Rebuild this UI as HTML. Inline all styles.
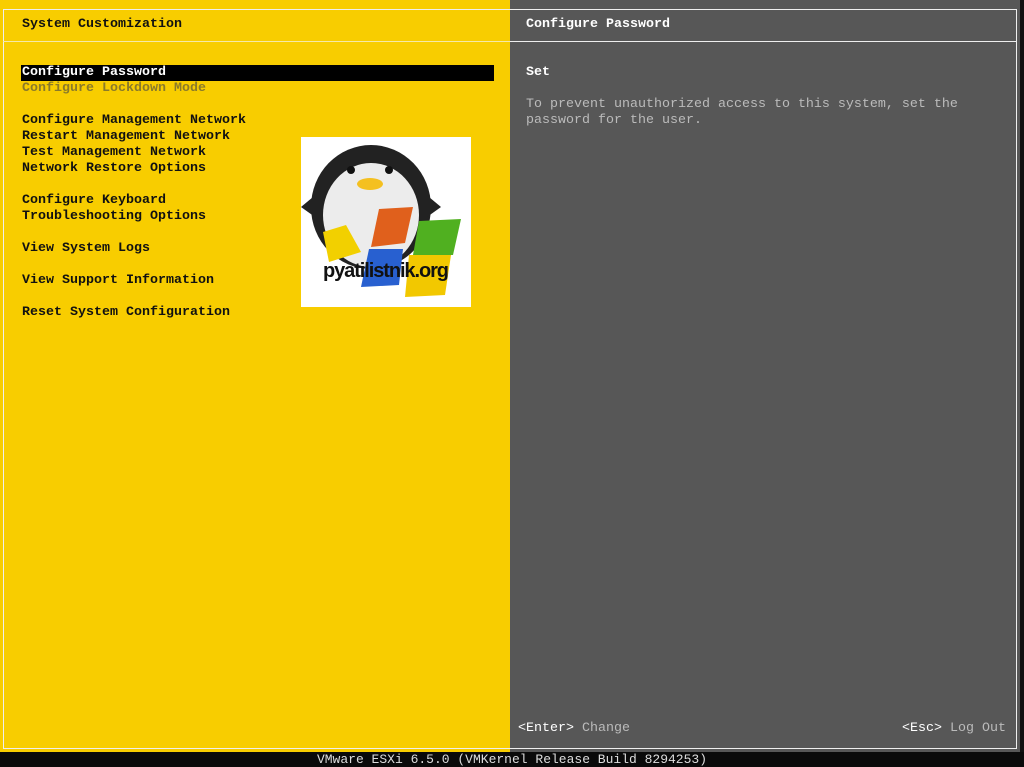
<!DOCTYPE html>
<html><head><style>
body{margin:0;width:1024px;height:767px;background:#111;position:relative;overflow:hidden;font-family:"Liberation Mono",monospace;font-size:13.33px;font-weight:bold}
.l{position:absolute;left:0;top:0;width:510px;height:752px;background:#f8cd00}
.r{position:absolute;left:510px;top:0;width:510px;height:752px;background:#575757}
.b{position:absolute;left:0;top:752px;width:1024px;height:15px;background:#0a0a0a;color:#ddd;text-align:center;font-size:13px;line-height:15px;font-weight:normal}
.t{position:absolute;white-space:pre;line-height:16px}
.ln{position:absolute;background:#eee}
</style></head><body>
<div class="l"></div><div class="r"></div>
<div class="ln" style="left:3px;top:9px;width:1014px;height:1px"></div>
<div class="ln" style="left:3px;top:9px;width:1px;height:740px"></div>
<div class="ln" style="left:3px;top:748px;width:1014px;height:1px"></div>
<div class="ln" style="left:1016px;top:9px;width:1px;height:740px"></div>
<div class="ln" style="left:3px;top:41px;width:1014px;height:1px;background:#f5e9a8"></div>
<div class="ln" style="left:510px;top:41px;width:507px;height:1px"></div>
<div class="t" style="left:22px;top:17px;color:#111">System Customization</div>
<div class="t" style="left:526px;top:17px;color:#fff">Configure Password</div>
<div style="position:absolute;left:21px;top:65px;width:473px;height:16px;background:#000"></div>
<div class="t" style="left:22px;top:65px;color:#fff">Configure Password</div>
<div class="t" style="left:22px;top:81px;color:#8a7a2a">Configure Lockdown Mode</div>
<div class="t" style="left:22px;top:113px;color:#111">Configure Management Network
Restart Management Network
Test Management Network
Network Restore Options

Configure Keyboard
Troubleshooting Options

View System Logs

View Support Information

Reset System Configuration</div>
<div class="t" style="left:526px;top:65px;color:#fff">Set</div>
<div class="t" style="left:526px;top:97px;color:#bbb;font-weight:normal">To prevent unauthorized access to this system, set the
password for the user.</div>
<div class="t" style="left:518px;top:721px;color:#fff;font-weight:normal">&lt;Enter&gt; <span style="color:#bbb">Change</span></div>
<div class="t" style="left:902px;top:721px;color:#fff;font-weight:normal">&lt;Esc&gt; <span style="color:#bbb">Log Out</span></div>
<div style="position:absolute;left:301px;top:137px;width:170px;height:170px;background:#fff;overflow:hidden">
<svg width="170" height="170">
<ellipse cx="70" cy="70" rx="60" ry="62" fill="#222"/>
<ellipse cx="70" cy="78" rx="48" ry="52" fill="#ececec"/>
<path d="M12 60 L0 70 L14 80Z M128 60 L140 70 L126 80Z" fill="#222"/>
<circle cx="50" cy="33" r="4" fill="#111"/><circle cx="88" cy="33" r="4" fill="#111"/>
<ellipse cx="69" cy="47" rx="13" ry="6" fill="#f4c020"/>
<path d="M22 95 L45 88 L60 115 L28 125 Z" fill="#f2d000"/>
<path d="M78 72 L112 70 L104 106 L70 110 Z" fill="#e0601c"/>
<path d="M118 84 L160 82 L152 118 L112 118 Z" fill="#50b020"/>
<path d="M68 112 L102 112 L98 148 L60 150 Z" fill="#2860d0"/>
<path d="M108 118 L150 118 L144 158 L104 160 Z" fill="#f2c800"/>
<text x="85" y="140" text-anchor="middle" font-family="Liberation Sans,sans-serif" font-weight="bold" font-size="20" fill="#111" textLength="126">pyatilistnik.org</text>
</svg></div>
<div class="b">VMware ESXi 6.5.0 (VMKernel Release Build 8294253)</div>
</body></html>
